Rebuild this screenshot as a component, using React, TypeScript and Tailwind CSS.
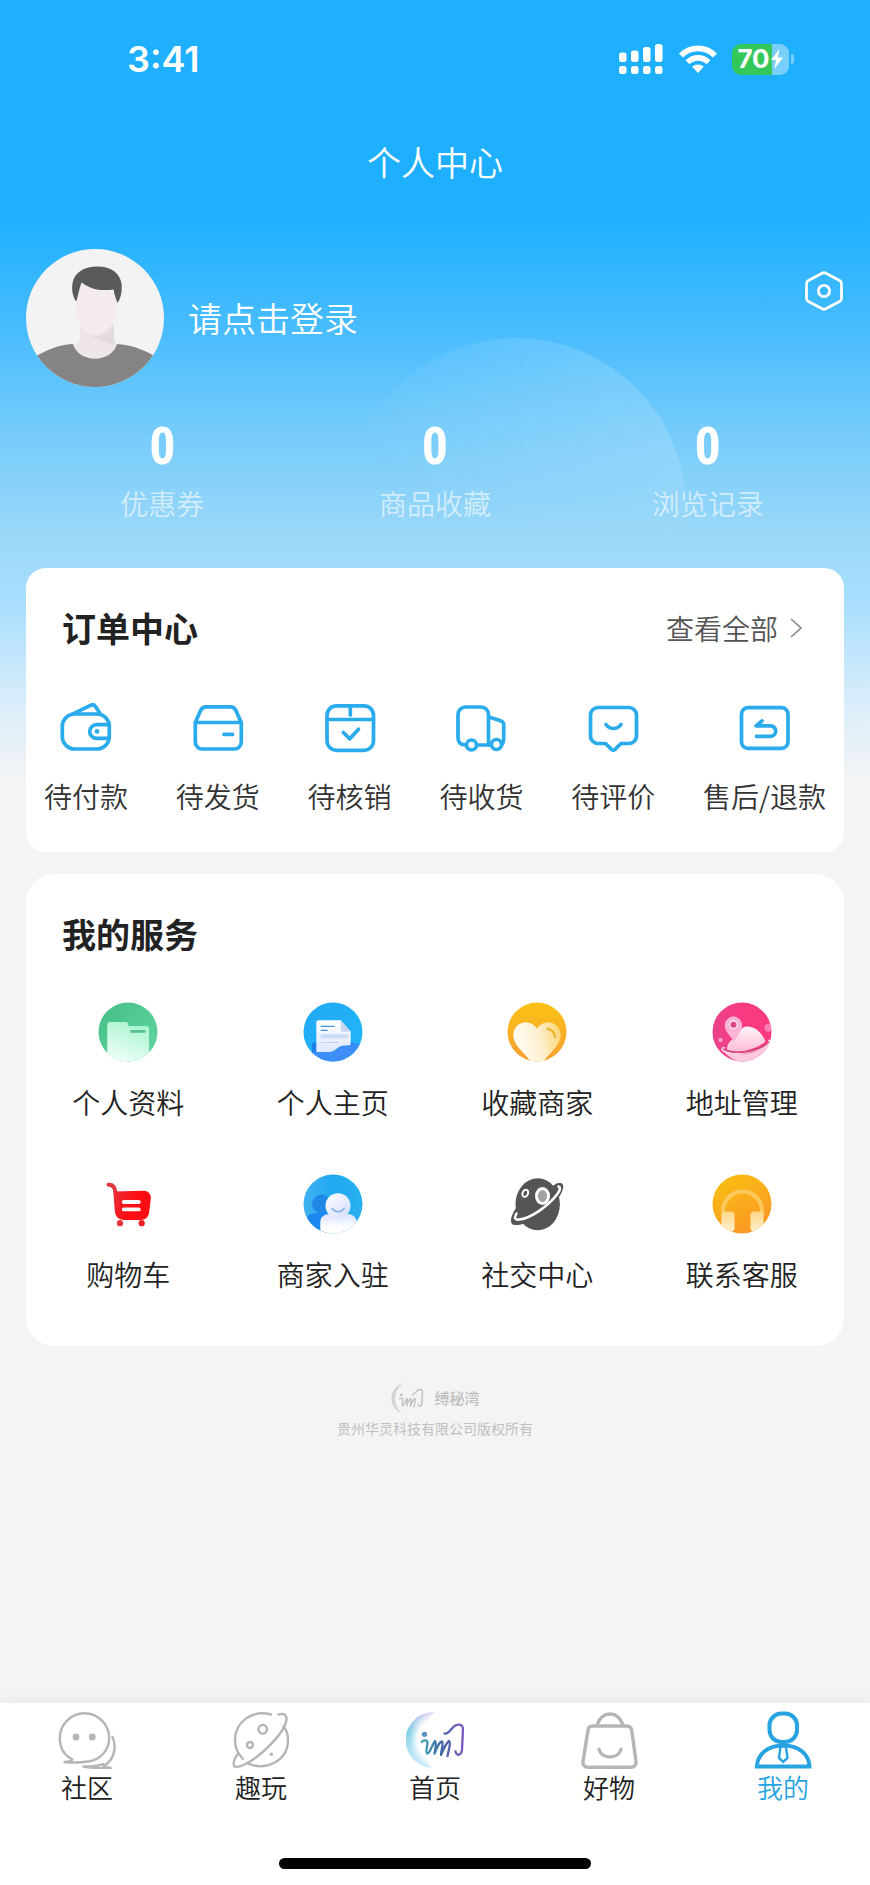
import { ReactNode } from "react";

interface IconItem {
  label: string;
  icon: ReactNode;
}

interface TabItem extends IconItem {
  active?: boolean;
}

const SignalIcon = () => (
  <svg width="46" height="32" viewBox="0 0 46 32" fill="#fff" aria-hidden="true">
    <rect x="1" y="9.500" width="7.500" height="9.500" rx="2.500" />
    <rect x="13" y="7.500" width="7.500" height="11.500" rx="2.500" />
    <rect x="25" y="4" width="7.500" height="15" rx="2.500" />
    <rect x="37" y="1" width="7.500" height="18" rx="2.500" />
    <rect x="1" y="23" width="7.500" height="8" rx="2.500" />
    <rect x="13" y="23" width="7.500" height="8" rx="2.500" />
    <rect x="25" y="23" width="7.500" height="8" rx="2.500" />
    <rect x="37" y="23" width="7.500" height="8" rx="2.500" />
  </svg>
);

const WifiIcon = () => (
  <svg width="40" height="30" viewBox="0 0 40 30" fill="none" aria-hidden="true">
    <path d="M3 11.500C12.500 2 27.500 2 37 11.500" stroke="#fff" strokeWidth="5.800" />
    <path d="M9.500 18.200c6-5.800 15-5.800 21 0" stroke="#fff" strokeWidth="5.600" />
    <path d="M20 29l-5.800-6.200c3.200-3 8.400-3 11.600 0z" fill="#fff" />
  </svg>
);

const BatteryIcon = () => (
  <div className="flex items-center gap-0.5">
    <div className="flex h-[31px] w-[57px] items-center justify-center rounded-[9px] bg-[linear-gradient(90deg,#34c759_70%,#78cffc_70%)]">
      <span className="font-['Inter',sans-serif] text-[26px] leading-none font-bold">70</span>
      <svg width="14" height="22" viewBox="0 0 14 22" fill="#fff" aria-hidden="true">
        <path d="M9.500 1L1 12h5l-1.600 9L13 9.400H8z" />
      </svg>
    </div>
    <span className="h-2.5 w-[3px] rounded-r-full bg-[#78cffc]" />
  </div>
);

const Avatar = () => (
  <svg
    viewBox="0 0 138 138"
    className="size-[138px] shrink-0 rounded-full"
    fill="none"
    aria-hidden="true"
  >
    <rect width="138" height="138" fill="#f3f3f3" />
    <path d="M54 70h33v20c0 4 2 6 6 6l-8 18H54l-10-18c6 0 10-2 10-8z" fill="#eee5e7" />
    <path d="M62 86c10 3 19-1 26-10v12c0 4 1 6 3 8-10-2-19-6-29-10z" fill="#e3dcdc" />
    <path d="M50 34h41v24c0 14-12 28-22 28S50 74 50 58z" fill="#f4ebed" />
    <path
      d="M50.300 52.500C46.500 48 45.500 40 46.500 34c2-11 12-16.500 25-16.500 14 0 22.500 7 24 17 .8 7-.3 14-3.800 19.500-2-4.500-3.500-9-4-13.500-13 1.500-22 .5-32-7-2.500 5-3.500 13-5.400 19z"
      fill="#595b59"
    />
    <path
      d="M0 138V114c8-6 27-18.500 47-19 2 8 11 14.800 22 14.800S89 103 91 95c19 1.500 31 7.500 47 18v25z"
      fill="#858383"
    />
  </svg>
);

const SettingsIcon = () => (
  <svg width="40" height="40" viewBox="0 0 40 40" fill="none" stroke="#fff" strokeWidth="2.800" aria-hidden="true">
    <path
      d="M18.200 2.200a4 4 0 0 1 3.600 0L35.600 9.600a3.600 3.600 0 0 1 1.900 3.200v14.400a3.600 3.600 0 0 1-1.900 3.200L21.800 37.800a4 4 0 0 1-3.600 0L4.400 30.400a3.600 3.600 0 0 1-1.900-3.200V12.800a3.600 3.600 0 0 1 1.900-3.200z"
      strokeLinejoin="round"
    />
    <circle cx="20" cy="20" r="5.600" />
  </svg>
);

const OrderIcon = ({ children }: { children: ReactNode }) => (
  <svg
    width="52"
    height="52"
    viewBox="0 0 52 52"
    fill="none"
    stroke="#29abec"
    strokeWidth="3.700"
    strokeLinecap="round"
    strokeLinejoin="round"
    aria-hidden="true"
  >
    {children}
  </svg>
);

const ORDERS: IconItem[] = [
  {
    label: "待付款",
    icon: (
      <OrderIcon>
        <rect x="2.300" y="12" width="47" height="35" rx="12.500" />
        <path d="M12 12.300L30.500 3.400c2-1 4-.6 5 1.200L40.500 12.300" />
        <path d="M49 22.700H36.500a6.800 6.800 0 0 0 0 13.600H49" />
        <circle cx="37" cy="29.400" r="2.400" fill="#29abec" stroke="none" />
      </OrderIcon>
    ),
  },
  {
    label: "待发货",
    icon: (
      <OrderIcon>
        <path d="M3.300 20.500V40a7 7 0 0 0 7 7h32a7 7 0 0 0 7-7V20.500z" />
        <path d="M3.500 20L8.600 8.500A6 6 0 0 1 14 4.900h24.500a6 6 0 0 1 5.400 3.600L49 20" />
        <path d="M32 32.400h8.500" />
      </OrderIcon>
    ),
  },
  {
    label: "待核销",
    icon: (
      <OrderIcon>
        <rect x="3" y="3.800" width="46.500" height="44.500" rx="9.500" />
        <path d="M3 17.500h46.500M26.300 4v9" />
        <path d="M19.300 30.500l6.500 6.300 8.700-9.500" />
      </OrderIcon>
    ),
  },
  {
    label: "待收货",
    icon: (
      <OrderIcon>
        <path d="M10.500 43C5.500 43 3 40.500 3 35.500V12.500a7.500 7.500 0 0 1 7.500-7.500H26a7.500 7.500 0 0 1 7.500 7.500V43" />
        <path d="M34 15l11.500 3.800c2 .7 3.200 1.700 3.200 3.700V37c0 3-.7 4.500-2 6M22 43h14" />
        <circle cx="16.500" cy="43" r="5" fill="#fff" />
        <circle cx="41.500" cy="42.500" r="5" fill="#fff" />
      </OrderIcon>
    ),
  },
  {
    label: "待评价",
    icon: (
      <OrderIcon>
        <path d="M11 5.500h31a7.500 7.500 0 0 1 7.500 7.500v21a7.500 7.500 0 0 1-7.500 7.500h-8l-6 5.800c-1.200 1.100-2.300 1.100-3.500 0L18.500 41.500H11A7.500 7.500 0 0 1 3.500 34V13A7.500 7.500 0 0 1 11 5.500z" />
        <path d="M19 22.500c4 5.300 11 5.300 15 0" />
      </OrderIcon>
    ),
  },
  {
    label: "售后/退款",
    icon: (
      <OrderIcon>
        <rect x="3.500" y="5.700" width="46.500" height="40.700" rx="6.500" />
        <path d="M24 19l-6 4.900h14.500a5.200 5.200 0 0 1 0 10.400H18.500" />
      </OrderIcon>
    ),
  },
];

const FolderIcon = () => (
  <svg width="60" height="60" viewBox="0 0 60 60" aria-hidden="true">
    <defs>
      <linearGradient id="folder-bg" x1="0" y1="0" x2="1" y2="1">
        <stop stopColor="#45be83" />
        <stop offset="1" stopColor="#62d6a4" />
      </linearGradient>
      <linearGradient id="folder-front" x1="0.300" y1="1" x2="0.700" y2="0">
        <stop stopColor="#f1fff9" />
        <stop offset="1" stopColor="#a6f4ce" />
      </linearGradient>
      <clipPath id="folder-clip">
        <circle cx="30" cy="30" r="29.500" />
      </clipPath>
    </defs>
    <g clipPath="url(#folder-clip)">
      <rect width="60" height="60" fill="url(#folder-bg)" />
      <path
        d="M9.300 60V22.500a2.500 2.500 0 0 1 2.500-2.500h16a2.500 2.500 0 0 1 2.500 2.500V24h17.800a3 3 0 0 1 3 3v33z"
        fill="url(#folder-front)"
      />
      <rect x="32.300" y="28" width="15" height="2.800" fill="#58bf92" />
    </g>
  </svg>
);

const DocumentIcon = () => (
  <svg width="60" height="60" viewBox="0 0 60 60" aria-hidden="true">
    <defs>
      <linearGradient id="doc-bg" x1="0" y1="0" x2="1" y2="1">
        <stop stopColor="#22a9f5" />
        <stop offset="1" stopColor="#20b7fb" />
      </linearGradient>
      <linearGradient id="doc-page" x1="0" y1="0" x2="0" y2="1">
        <stop stopColor="#fff" />
        <stop offset="1" stopColor="#dce7ff" />
      </linearGradient>
      <clipPath id="doc-clip">
        <circle cx="30" cy="30" r="29.500" />
      </clipPath>
    </defs>
    <g clipPath="url(#doc-clip)">
      <rect width="60" height="60" fill="url(#doc-bg)" />
      <rect x="9" y="40.500" width="42" height="12" rx="2" fill="#1b7fe6" />
      <path d="M13.300 50V20.300a2 2 0 0 1 2-2h22.400l10 11.400V50z" fill="url(#doc-page)" />
      <path d="M37.700 18.300l10 11.400h-8a2 2 0 0 1-2-2z" fill="#c9d5f0" />
      <path d="M17.700 24.400h14M17.700 28.400h7" stroke="#4a97dc" strokeWidth="1.300" />
      <rect x="17.700" y="32.300" width="27.500" height="4" fill="#cbdcf6" />
      <path d="M17.700 40.500h18" stroke="#c3d2f0" strokeWidth="1" />
      <path d="M0 50h26c7 0 8-6.500 16-6.500 5 0 7-1 10-2h8v20H0z" fill="#3d8ef8" />
    </g>
  </svg>
);

const HeartIcon = () => (
  <svg width="60" height="60" viewBox="0 0 60 60" aria-hidden="true">
    <defs>
      <linearGradient id="heart-bg" x1="0" y1="0" x2="0" y2="1">
        <stop stopColor="#fbc315" />
        <stop offset="1" stopColor="#f59f33" />
      </linearGradient>
      <linearGradient id="heart-front" x1="0" y1="0.600" x2="1" y2="0.400">
        <stop offset="0.200" stopColor="#fffaec" />
        <stop offset="0.600" stopColor="#fdeecb" />
        <stop offset="1" stopColor="#fbd879" />
      </linearGradient>
      <clipPath id="heart-clip">
        <circle cx="30" cy="30" r="29.500" />
      </clipPath>
    </defs>
    <g clipPath="url(#heart-clip)">
      <rect width="60" height="60" fill="url(#heart-bg)" />
      <path
        d="M30 26.500c4-5.500 10-7.500 15.500-5.500 8 3 10 12 6.500 19C49 46.500 41 53 36 60H24C19 53 11 46.500 8 40c-3.500-7-1.500-16 6.500-19 5.500-2 11.500 0 15.500 5.500z"
        fill="url(#heart-front)"
      />
      <path d="M39.700 26.700c4.800.3 8.300 4.300 8.500 9.300" fill="none" stroke="#eab12d" strokeWidth="2.200" />
    </g>
  </svg>
);

const AddressIcon = () => (
  <svg width="60" height="60" viewBox="0 0 60 60" aria-hidden="true">
    <defs>
      <linearGradient id="addr-bg" x1="0" y1="0" x2="1" y2="0">
        <stop stopColor="#e9438c" />
        <stop offset="0.500" stopColor="#f93980" />
      </linearGradient>
      <linearGradient id="addr-light" x1="0" y1="0" x2="0" y2="1">
        <stop stopColor="#fff5fa" />
        <stop offset="1" stopColor="#fcbad5" />
      </linearGradient>
      <clipPath id="addr-clip">
        <circle cx="30" cy="30" r="29.500" />
      </clipPath>
    </defs>
    <g clipPath="url(#addr-clip)">
      <rect width="60" height="60" fill="url(#addr-bg)" />
      <circle cx="8.500" cy="38" r="2.200" fill="#fb9cc5" />
      <circle cx="56.500" cy="25.700" r="4" fill="#fa7fb1" />
      <path
        d="M15.500 50c-2-7 2.500-12 8-14 3.500-6 5.500-12 12.500-11.500 8.500.5 15 8 17.500 15C46 47 29 51 15.500 50z"
        fill="url(#addr-light)"
      />
      <path d="M11 49c14 6 34 3 46-7 0 9-8 19-24 20-8-2-16-6-22-13z" fill="#fcc9de" />
      <path d="M13 46c-3-1-4 1.500-1.500 3 12 5 36 1 45.500-7.500 2-2 1-3.500-1-3" fill="none" stroke="#fde1ed" strokeWidth="1.500" />
      <path d="M14 48.500c13 4 32 1 41-7" fill="none" stroke="#d0427d" strokeWidth="1.600" />
      <path
        d="M22 39.500c-3.500-5.500-9.300-10-9.300-16.200a8.700 8.700 0 0 1 17.400 0c0 6.200-5.100 10.700-8.100 16.200z"
        fill="#fbb4d3"
      />
      <circle cx="21.500" cy="22.700" r="3.800" fill="#d9488a" stroke="#fde4ee" strokeWidth="1.500" />
    </g>
  </svg>
);

const CartIcon = () => (
  <svg width="60" height="60" viewBox="0 0 60 60" fill="none" strokeLinecap="round" aria-hidden="true">
    <defs>
      <linearGradient id="cart-body" x1="0" y1="0" x2="1" y2="0.400">
        <stop stopColor="#e8303a" />
        <stop offset="0.600" stopColor="#fd0e12" />
      </linearGradient>
    </defs>
    <path d="M10.500 10.700c4.500-.3 6.500 2.500 7 8" stroke="#df3a44" strokeWidth="4" />
    <path
      d="M15.300 17.500L45 16.700c5.500 0 8.300 3.300 7.800 8.300l-1.600 13c-.7 5-3.700 8-8.700 8H26.500c-6.500 0-9-3.500-9.700-9z"
      fill="url(#cart-body)"
    />
    <path d="M25.800 28h15M25.800 35.400h15" stroke="#fff" strokeWidth="3.800" />
    <circle cx="22" cy="49.200" r="3.100" fill="#e5343c" />
    <circle cx="43.700" cy="49.200" r="3.100" fill="#ee1f27" />
  </svg>
);

const MerchantIcon = () => (
  <svg width="60" height="60" viewBox="0 0 60 60" aria-hidden="true">
    <defs>
      <linearGradient id="mer-bg" x1="0" y1="0" x2="1" y2="0">
        <stop stopColor="#43b2ef" />
        <stop offset="0.500" stopColor="#1fa9f3" />
        <stop offset="1" stopColor="#2bb0ee" />
      </linearGradient>
      <linearGradient id="mer-body" x1="0" y1="0" x2="0" y2="1">
        <stop stopColor="#d9e3fd" />
        <stop offset="0.700" stopColor="#fff" />
      </linearGradient>
      <linearGradient id="mer-head" x1="0" y1="0" x2="1" y2="1">
        <stop stopColor="#fff" />
        <stop offset="1" stopColor="#d2dcfa" />
      </linearGradient>
      <clipPath id="mer-clip">
        <circle cx="30" cy="30" r="29.500" />
      </clipPath>
    </defs>
    <g clipPath="url(#mer-clip)">
      <rect width="60" height="60" fill="url(#mer-bg)" />
      <circle cx="18.500" cy="30" r="9.500" fill="#2188e8" />
      <path d="M4 60V46c0-5 4-7 9-7h12v21z" fill="#1d86ef" />
      <path d="M17.300 60V48c0-5 4-8 9-8h18.500c6 0 9 4 10 12v8z" fill="url(#mer-body)" />
      <circle cx="35" cy="31.700" r="12.500" fill="url(#mer-head)" />
      <path d="M28.700 34.300c3.300 4.500 9.300 4.500 12.600 0" fill="none" stroke="#84aee9" strokeWidth="1.500" strokeLinecap="round" />
    </g>
  </svg>
);

const SocialIcon = () => (
  <svg width="60" height="60" viewBox="0 0 60 60" fill="none" aria-hidden="true">
    <path
      d="M9 34C3 43 2 51 8 51c12 1 34-14 44-28 5-7 6-14 1-14-3-.5-5 1-7 3l-20 10z"
      fill="#555"
    />
    <ellipse cx="30.700" cy="30.300" rx="22.200" ry="26" fill="#555" />
    <path
      d="M9.500 39.500c-3 5.500-1 6.500 3 6 12-1.500 29-14 37.500-25 3-4 4-7 1.500-8"
      stroke="#fff"
      strokeWidth="2.600"
      strokeLinecap="round"
    />
    <ellipse cx="18.300" cy="19.300" rx="2.700" ry="3.700" transform="rotate(25 18.300 19.300)" stroke="#fff" strokeWidth="2" />
    <ellipse cx="35.500" cy="22" rx="6" ry="7.600" stroke="#fff" strokeWidth="3" fill="#a3a3a3" />
  </svg>
);

const HeadsetIcon = () => (
  <svg width="60" height="60" viewBox="0 0 60 60" aria-hidden="true">
    <defs>
      <linearGradient id="head-bg" x1="0" y1="0" x2="0.500" y2="1">
        <stop stopColor="#f8c20f" />
        <stop offset="1" stopColor="#fb9a26" />
      </linearGradient>
      <linearGradient id="head-cup" x1="0" y1="0" x2="0" y2="1">
        <stop stopColor="#fed688" />
        <stop offset="1" stopColor="#fff0cd" />
      </linearGradient>
      <clipPath id="head-clip">
        <circle cx="30" cy="30" r="29.500" />
      </clipPath>
    </defs>
    <g clipPath="url(#head-clip)">
      <rect width="60" height="60" fill="url(#head-bg)" />
      <path d="M11 42v-5a19.500 19.500 0 0 1 39 0v5" fill="none" stroke="#fdc95c" strokeWidth="4" />
      <rect x="9.500" y="37.500" width="13" height="20" rx="3.500" fill="url(#head-cup)" />
      <rect x="38.500" y="37.500" width="13" height="20" rx="3.500" fill="url(#head-cup)" />
    </g>
  </svg>
);

const SERVICES: IconItem[] = [
  { label: "个人资料", icon: <FolderIcon /> },
  { label: "个人主页", icon: <DocumentIcon /> },
  { label: "收藏商家", icon: <HeartIcon /> },
  { label: "地址管理", icon: <AddressIcon /> },
  { label: "购物车", icon: <CartIcon /> },
  { label: "商家入驻", icon: <MerchantIcon /> },
  { label: "社交中心", icon: <SocialIcon /> },
  { label: "联系客服", icon: <HeadsetIcon /> },
];

// 品牌标志的手写线条
const LogoStrokes = () => (
  <>
    <path d="M15.700 31C18 28.500 22 29 21.500 32C21 36 19 42 21.500 42.500C24 42 26 34 29 30C31 32 29 38 28.500 42.500C31 36 33 31 36 30.500C38 32 35 39 35 44C37.500 38 40 32 43 30C45.500 32 42.500 39 41.500 45" />
    <path d="M38.500 22.500c5 1.500 6.500-7 12-8.500 4.500-1 6.500.5 6.500 4.500L56 39c-.5 5.500-5.500 6.500-6.500 1.500" />
  </>
);

const HomeLogo = () => (
  <svg width="58" height="58" viewBox="0 0 58 58" fill="none" aria-hidden="true">
    <defs>
      <linearGradient id="moon" x1="0.700" y1="0" x2="0.400" y2="1">
        <stop stopColor="#d6cbf3" />
        <stop offset="0.500" stopColor="#86d3e6" />
        <stop offset="1" stopColor="#d3ecfb" />
      </linearGradient>
      <radialGradient id="moon-inner">
        <stop offset="0.720" stopColor="#fff" />
        <stop offset="1" stopColor="#fff" stopOpacity="0" />
      </radialGradient>
      <linearGradient id="logo-line" gradientUnits="userSpaceOnUse" x1="15" y1="0" x2="58" y2="0">
        <stop stopColor="#3fa9b8" />
        <stop offset="0.500" stopColor="#4566a6" />
        <stop offset="1" stopColor="#7d57c0" />
      </linearGradient>
    </defs>
    <path d="M29 1a28 28 0 0 0-3 56C13 46 13 12 29 1z" fill="url(#moon)" />
    <circle cx="34" cy="29" r="31" fill="url(#moon-inner)" />
    <circle cx="18.500" cy="23.300" r="2.600" fill="#5b8fc4" />
    <g stroke="url(#logo-line)" strokeWidth="2.300" strokeLinecap="round" strokeLinejoin="round">
      <LogoStrokes />
    </g>
  </svg>
);

const FooterLogo = () => (
  <svg width="34" height="32" viewBox="0 0 58 58" fill="none" aria-hidden="true">
    <path d="M23 1C-6 11-6 47 20 57C3 44 3 14 23 1z" fill="#d3d3d3" />
    <circle cx="18.500" cy="23.300" r="2.600" fill="#c0c0c0" />
    <g stroke="#c0c0c0" strokeWidth="2.600" strokeLinecap="round" strokeLinejoin="round">
      <LogoStrokes />
    </g>
  </svg>
);

const TabIcon = ({ children }: { children: ReactNode }) => (
  <svg
    width="58"
    height="58"
    viewBox="0 0 58 58"
    fill="none"
    stroke="#b5b5b5"
    strokeWidth="2.400"
    strokeLinecap="round"
    strokeLinejoin="round"
    aria-hidden="true"
  >
    {children}
  </svg>
);

const TABS: TabItem[] = [
  {
    label: "社区",
    icon: (
      <TabIcon>
        <path d="M6.500 51c4-.3 7-.8 8-2.500C5.500 44 1.800 36 1.800 27a24.700 24.700 0 1 1 49.400 0c0 12-9 22-21 23.500-8 1.200-16 1.300-23.700.5z" />
        <path d="M54.500 26c3.500 7 2.500 17-2 23-2 2.500-4 4.500-7 6 2 1 4 1.800 7 2-9 .4-18 .2-27-1.500 8 .2 14-.4 19.500-2.500" />
        <circle cx="18" cy="26" r="3.400" fill="#b5b5b5" stroke="none" />
        <circle cx="34.300" cy="26" r="3.400" fill="#b5b5b5" stroke="none" />
      </TabIcon>
    ),
  },
  {
    label: "趣玩",
    icon: (
      <TabIcon>
        <path d="M39 3.500C20 -1.500 3 11 3 29c0 8 3 14 8 19M15 52c18 9 41-2 41-23 0-5-1.500-10-4.500-14" />
        <path d="M46.500 3.500c6-1.500 8.500.5 8 5-1.500 14-27 37.500-41 44.500-4 2-8.500 3.500-11 2.500-2-1.500-.5-8 3.500-13" />
        <circle cx="30.700" cy="18.300" r="4.300" />
        <circle cx="18" cy="34" r="3" />
        <circle cx="39.300" cy="43.300" r="1.800" fill="#b5b5b5" stroke="none" />
      </TabIcon>
    ),
  },
  { label: "首页", icon: <HomeLogo /> },
  {
    label: "好物",
    icon: (
      <TabIcon>
        <g strokeWidth="3.400">
          <path d="M12.500 15h34.800a4.500 4.500 0 0 1 4.400 4L56 50.500a5 5 0 0 1-5 5.800H8a5 5 0 0 1-5-5.800L8 19a4.500 4.500 0 0 1 4.500-4z" />
          <path d="M17 14c2.500-7 7-11 13-11s10.500 4 13 11" />
          <path d="M19 38.500c3 10 19 10 22 0" />
        </g>
      </TabIcon>
    ),
  },
  {
    label: "我的",
    active: true,
    icon: (
      <TabIcon>
        <g stroke="#28a3e1" strokeWidth="4" strokeLinecap="butt" strokeLinejoin="miter">
          <rect x="15.500" y="2.500" width="27.500" height="28.500" rx="12" />
          <path d="M2.800 55.500C3.500 43 14 34.500 29.200 34.500S55 43 55.500 55.500z" />
          <path d="M26.500 35.500h5.400l1.600 11.500-4.300 3.800L25 47z" strokeWidth="2.400" />
        </g>
      </TabIcon>
    ),
  },
];

const STATS = [
  { label: "优惠券", value: 0 },
  { label: "商品收藏", value: 0 },
  { label: "浏览记录", value: 0 },
];

const HeaderWaves = () => (
  <svg
    viewBox="0 0 870 340"
    className="pointer-events-none absolute inset-x-0 top-[230px] w-full"
    fill="none"
    aria-hidden="true"
  >
    <defs>
      <linearGradient id="wave-a" x1="0.850" y1="0.100" x2="0.250" y2="0.600">
        <stop stopColor="#fff" stopOpacity="0.160" />
        <stop offset="1" stopColor="#fff" stopOpacity="0" />
      </linearGradient>
      <linearGradient id="wave-fade" x1="0" y1="0" x2="0" y2="1">
        <stop stopColor="#fff" />
        <stop offset="0.350" stopColor="#fff" />
        <stop offset="0.600" stopColor="#000" />
      </linearGradient>
      <mask id="wave-mask">
        <rect x="340" y="108" width="360" height="340" fill="url(#wave-fade)" />
      </mask>
    </defs>
    <circle cx="516" cy="278" r="170" fill="url(#wave-a)" mask="url(#wave-mask)" />
  </svg>
);

const StatusBar = () => (
  <div className="flex items-center justify-between pt-[39px] pr-[50px] pl-[101px]">
    <span className="font-['Inter',sans-serif] text-4xl leading-10 font-semibold">3:41</span>
    <div className="flex items-center gap-3.5">
      <SignalIcon />
      <WifiIcon />
      <BatteryIcon />
    </div>
  </div>
);

const Header = () => (
  <header className="relative px-[26px] text-white">
    <StatusBar />
    <h1 className="pt-[59px] pb-[63px] text-center text-[34px] leading-12 font-[350]">个人中心</h1>
    <div className="flex items-start justify-between">
      <button type="button" className="flex items-center gap-6">
        <Avatar />
        <span className="text-[34px] leading-12 font-[350]">请点击登录</span>
      </button>
      <button type="button" aria-label="设置" className="mt-[22px]">
        <SettingsIcon />
      </button>
    </div>
    <dl className="mt-8 grid grid-cols-3 text-center">
      {STATS.map((stat) => (
        <div key={stat.label} className="flex flex-col-reverse gap-2">
          <dt className="text-[28px] leading-10 font-[350] text-white/60">{stat.label}</dt>
          <dd className="font-['Roboto_Condensed','Liberation_Sans_Narrow',Roboto,sans-serif] text-[52px] leading-14 font-bold">
            {stat.value}
          </dd>
        </div>
      ))}
    </dl>
  </header>
);

const OrderCenter = () => (
  <section className="rounded-[20px] bg-white px-[18px] pt-9 pb-9">
    <div className="flex items-center justify-between pr-6 pl-[18px]">
      <h2 className="text-[34px] leading-12 font-bold text-[#222]">订单中心</h2>
      <a href="#orders" className="flex items-center gap-3 text-[28px] leading-10 font-[350] text-[#555]">
        查看全部
        <svg width="12" height="20" viewBox="0 0 12 20" fill="none" stroke="#888" strokeWidth="1.600" aria-hidden="true">
          <path d="M1 1l10 9-10 9" />
        </svg>
      </a>
    </div>
    <div className="mt-[50px] flex justify-between">
      {ORDERS.map((order) => (
        <button key={order.label} type="button" className="flex flex-col items-center gap-[22px]">
          {order.icon}
          <span className="text-[28px] leading-10 font-[350] text-[#333]">{order.label}</span>
        </button>
      ))}
    </div>
  </section>
);

const Services = () => (
  <section className="rounded-[28px] bg-white pt-9 pb-[52px]">
    <h2 className="px-9 text-[34px] leading-12 font-bold text-[#222]">我的服务</h2>
    <div className="mt-11 grid grid-cols-4 gap-y-[52px]">
      {SERVICES.map((service) => (
        <button key={service.label} type="button" className="flex flex-col items-center gap-5">
          {service.icon}
          <span className="text-[28px] leading-10 font-[350] text-[#222]">{service.label}</span>
        </button>
      ))}
    </div>
  </section>
);

const TabBar = () => (
  <nav className="sticky bottom-0 mt-auto bg-white pt-2 pb-4 shadow-[0_-2px_12px_rgba(0,0,0,0.06)]">
    <div className="grid grid-cols-5">
      {TABS.map((tab) => (
        <a
          key={tab.label}
          href={`#${tab.label}`}
          className={`flex flex-col items-center text-[26px] leading-9 font-[350] ${
            tab.active ? "text-[#28a3e1]" : "text-[#222]"
          }`}
        >
          {tab.icon}
          {tab.label}
        </a>
      ))}
    </div>
    <div className="mx-auto mt-[53px] h-[11px] w-[312px] rounded-full bg-black" />
  </nav>
);

export default function App() {
  return (
    <div className="relative flex min-h-screen flex-col bg-[#f4f4f4] bg-[linear-gradient(180deg,#1eb0ff_0px,#1eb0ff_215px,#48bcfe_330px,#70cafb_420px,#9ed9f8_545px,#a7defd_600px,#dceefa_710px,#f4f4f4_785px)] font-['Noto_Sans_CJK_SC',sans-serif]">
      <HeaderWaves />
      <Header />
      <main className="relative mt-[45px] flex flex-col gap-[22px] px-[26px]">
        <OrderCenter />
        <Services />
      </main>
      <footer className="mt-9 mb-10 flex flex-col items-center gap-1 text-[#c0c0c0]">
        <div className="flex items-center gap-2.5 text-[15px] leading-8 font-medium">
          <FooterLogo />
          缚秘湾
        </div>
        <p className="text-sm">贵州华灵科技有限公司版权所有</p>
      </footer>
      <TabBar />
    </div>
  );
}
